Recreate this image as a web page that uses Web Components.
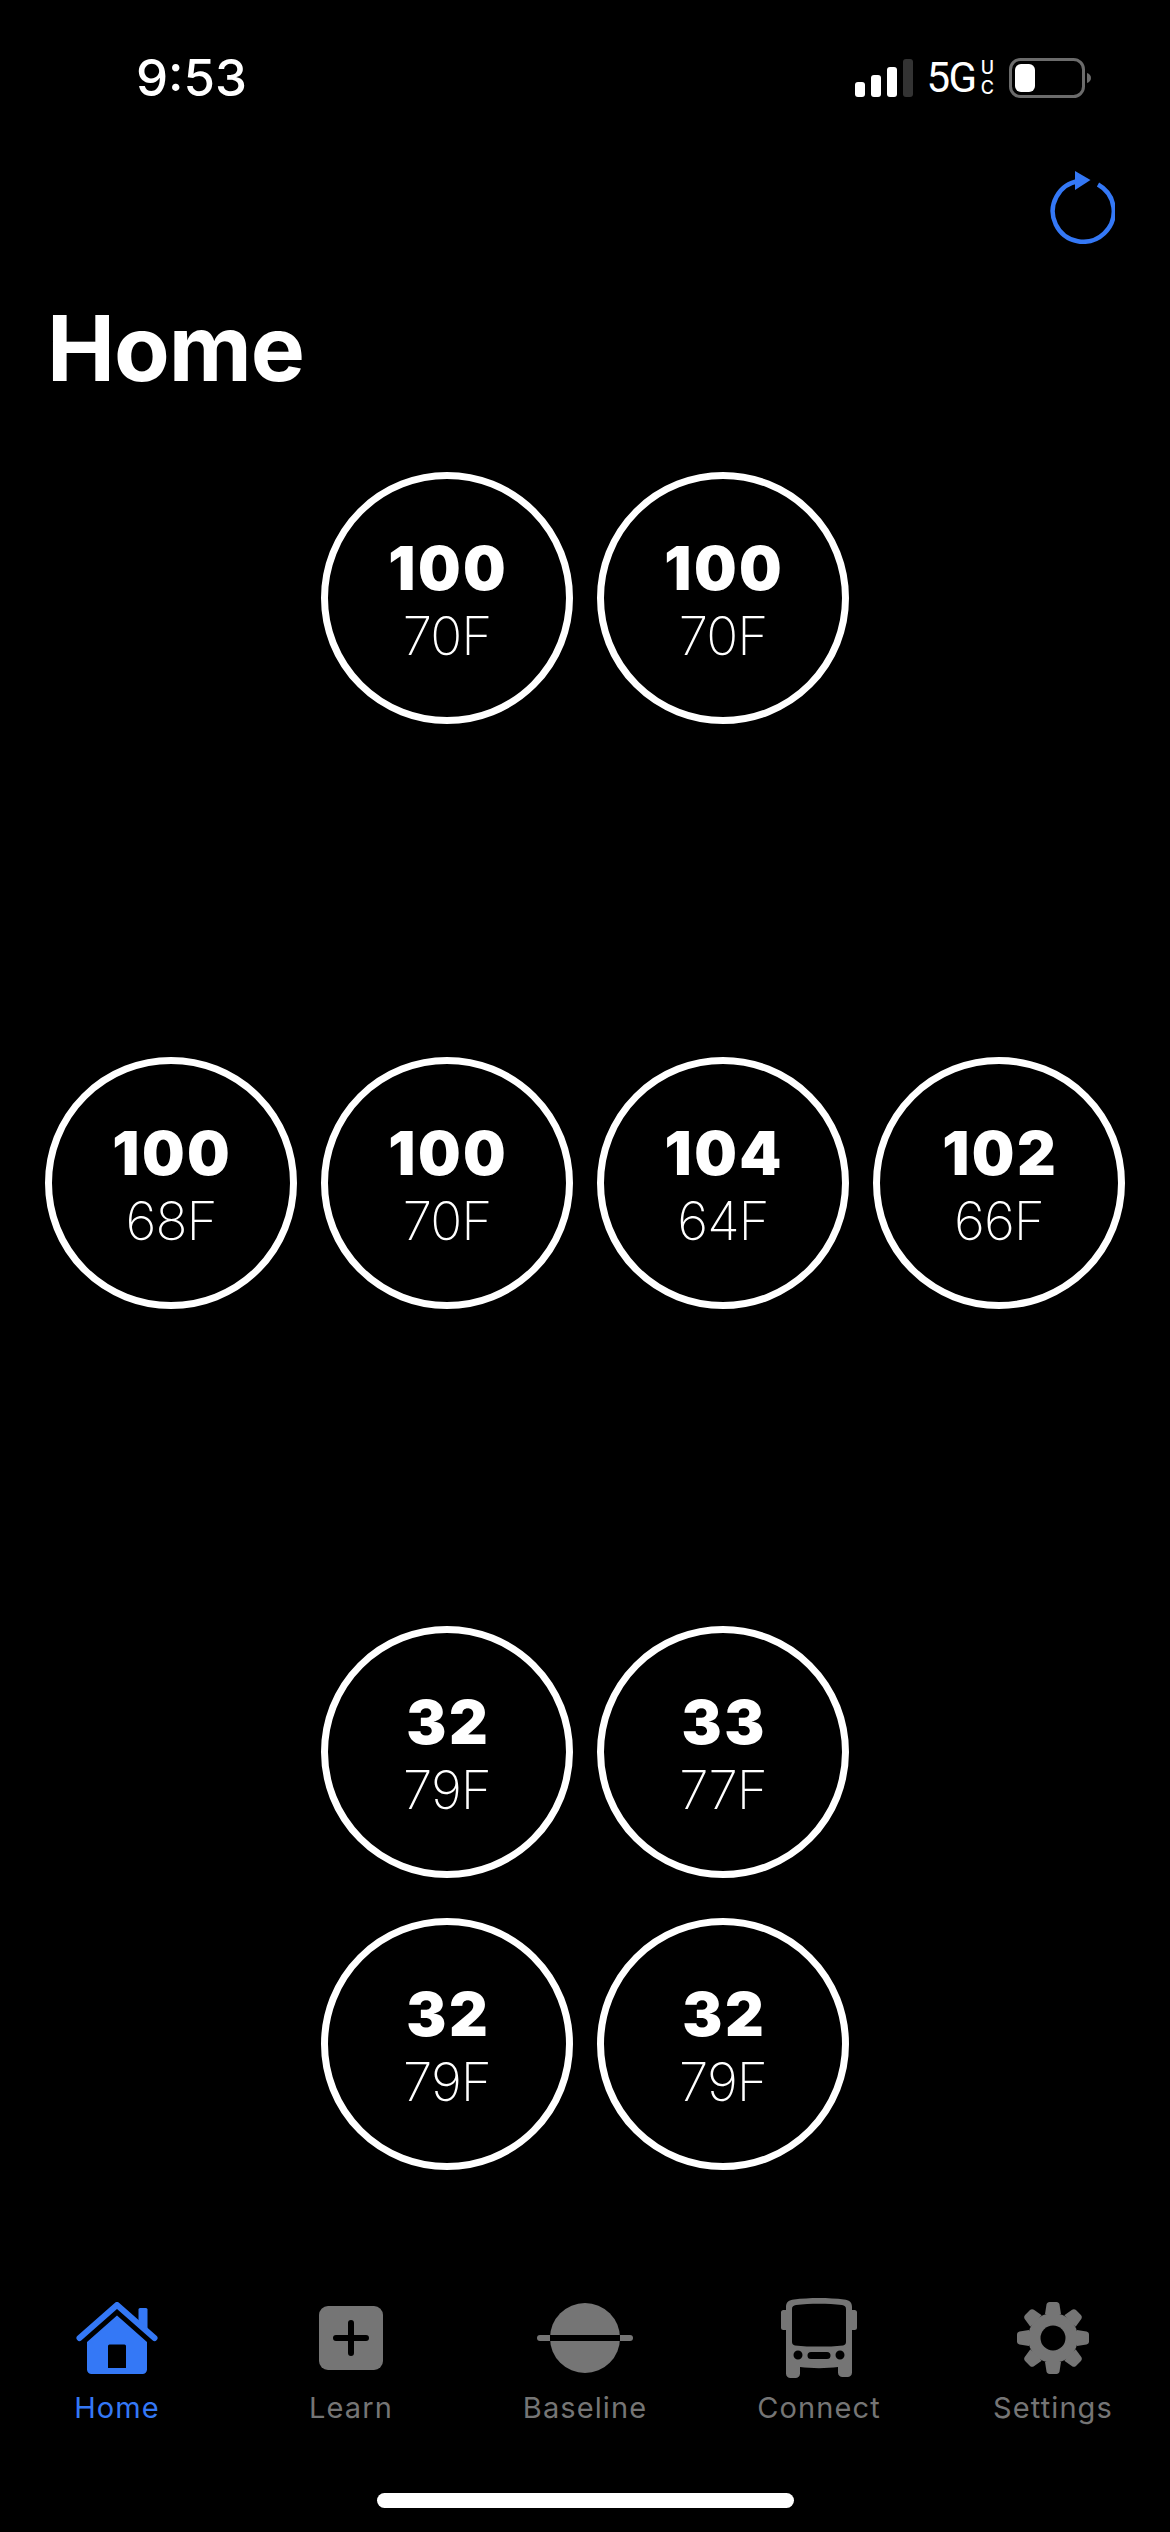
<!DOCTYPE html>
<html lang="en">
<head>
<meta charset="utf-8">
<title>Home</title>
<style>
  html, body { margin: 0; padding: 0; background: #000; }
  body { width: 1170px; height: 2532px; overflow: hidden; font-family: Inter, "Liberation Sans", sans-serif; color: #fff; }
  app-shell svg { display: block; }
</style>
</head>
<body>
<app-shell>
  <status-bar slot="status"></status-bar>
  <refresh-button slot="toolbar"></refresh-button>
  <page-title slot="title">Home</page-title>

  <gauge-row style="--row-top: 0">
    <tire-gauge><span slot="pressure">100</span><span slot="temp">70F</span></tire-gauge>
    <tire-gauge><span slot="pressure">100</span><span slot="temp">70F</span></tire-gauge>
  </gauge-row>
  <gauge-row style="--row-top: 333px">
    <tire-gauge><span slot="pressure">100</span><span slot="temp">68F</span></tire-gauge>
    <tire-gauge><span slot="pressure">100</span><span slot="temp">70F</span></tire-gauge>
    <tire-gauge><span slot="pressure">104</span><span slot="temp">64F</span></tire-gauge>
    <tire-gauge><span slot="pressure">102</span><span slot="temp">66F</span></tire-gauge>
  </gauge-row>
  <gauge-row style="--row-top: 317px">
    <tire-gauge><span slot="pressure">32</span><span slot="temp">79F</span></tire-gauge>
    <tire-gauge><span slot="pressure">33</span><span slot="temp">77F</span></tire-gauge>
  </gauge-row>
  <gauge-row style="--row-top: 40px">
    <tire-gauge><span slot="pressure">32</span><span slot="temp">79F</span></tire-gauge>
    <tire-gauge><span slot="pressure">32</span><span slot="temp">79F</span></tire-gauge>
  </gauge-row>

  <tab-bar slot="tabs">
    <tab-item active>
      <svg slot="icon" width="82" height="72" viewBox="0 0 82 72">
        <path fill="currentColor" d="M62.5 7.5a1.5 1.5 0 0 1 1.5-1.5h6a1.5 1.5 0 0 1 1.5 1.5V26h-9z"/>
        <path fill="none" stroke="#000" stroke-width="3" d="M0 39L41 7l41 32"/>
        <path fill="none" stroke="currentColor" stroke-width="6" stroke-linecap="round" stroke-linejoin="round" d="M3.5 36L41 3l37.5 33"/>
        <path fill="currentColor" fill-rule="evenodd" d="M41 13.5L71 40v27.500a4.500 4.500 0 0 1-4.500 4.500h-51a4.500 4.500 0 0 1-4.500-4.500V40zM33.500 42.500a1.500 1.500 0 0 0-1.500 1.500v22h18V44a1.500 1.500 0 0 0-1.500-1.500z"/>
      </svg>
      Home
    </tab-item>
    <tab-item>
      <svg slot="icon" width="64" height="64" viewBox="0 0 64 64">
        <rect width="64" height="64" rx="9" fill="currentColor"/>
        <path stroke="#000" stroke-width="6" stroke-linecap="round" d="M32 17v30M17 32h30"/>
      </svg>
      Learn
    </tab-item>
    <tab-item>
      <svg slot="icon" width="96" height="70" viewBox="0 0 96 70">
        <circle cx="48" cy="35" r="35" fill="currentColor"/>
        <rect x="0" y="32" width="96" height="6" rx="3" fill="currentColor"/>
        <rect x="13" y="32" width="70" height="6" fill="#000"/>
      </svg>
      Baseline
    </tab-item>
    <tab-item>
      <svg slot="icon" width="76" height="80" viewBox="0 0 76 80">
        <path fill="currentColor" fill-rule="evenodd" d="M5 9C5 4 8 2 13 1.500 28 -.5 48 -.5 63 1.500 68 2 71 4 71 9v3h2.500a2.500 2.500 0 0 1 2.500 2.500v15a2.500 2.500 0 0 1-2.500 2.500H71v42.500c0 2.800-2 4.500-4.500 4.500h-5c-2.500 0-4.500-1.700-4.500-4.500V69c-12 1.500-26 1.500-38 0v6.500c0 2.800-2 4.500-4.500 4.500h-5C7 80 5 78.300 5 75.500V32H2.500A2.500 2.500 0 0 1 0 29.500v-15A2.500 2.500 0 0 1 2.500 12H5zM15 7c-2.500.3-4 1.500-4 4v33c0 2 1 3 3 3.400 15 1.600 33 1.600 48 0 2-.4 3-1.400 3-3.400V11c0-2.500-1.500-3.700-4-4-14-1.600-32-1.600-46 0zM17 52.500a4.500 4.500 0 1 0 0 9 4.500 4.500 0 0 0 0-9zM59 52.500a4.500 4.500 0 1 0 0 9 4.500 4.500 0 0 0 0-9zM30 54a3.500 3.500 0 0 0 0 7h16a3.500 3.500 0 0 0 0-7z"/>
      </svg>
      Connect
    </tab-item>
    <tab-item>
      <svg slot="icon" width="72" height="72" viewBox="0 0 72 72">
        <circle cx="36" cy="36" r="25" fill="currentColor"/>
        <g fill="currentColor">
          <path d="M28 12l1.500-9.500C29.800 1 31 0 32.500 0h7c1.500 0 2.700 1 3 2.500L44 12z"/>
          <path transform="rotate(45 36 36)" d="M28 12l1.500-9.500C29.800 1 31 0 32.500 0h7c1.500 0 2.700 1 3 2.500L44 12z"/>
          <path transform="rotate(90 36 36)" d="M28 12l1.500-9.500C29.800 1 31 0 32.500 0h7c1.500 0 2.700 1 3 2.500L44 12z"/>
          <path transform="rotate(135 36 36)" d="M28 12l1.500-9.500C29.800 1 31 0 32.500 0h7c1.500 0 2.700 1 3 2.500L44 12z"/>
          <path transform="rotate(180 36 36)" d="M28 12l1.500-9.500C29.800 1 31 0 32.500 0h7c1.500 0 2.700 1 3 2.500L44 12z"/>
          <path transform="rotate(225 36 36)" d="M28 12l1.500-9.500C29.800 1 31 0 32.500 0h7c1.500 0 2.700 1 3 2.500L44 12z"/>
          <path transform="rotate(270 36 36)" d="M28 12l1.500-9.500C29.800 1 31 0 32.500 0h7c1.500 0 2.700 1 3 2.500L44 12z"/>
          <path transform="rotate(315 36 36)" d="M28 12l1.500-9.500C29.800 1 31 0 32.500 0h7c1.500 0 2.700 1 3 2.500L44 12z"/>
        </g>
        <circle cx="36" cy="36" r="12.500" fill="#000"/>
      </svg>
      Settings
    </tab-item>
  </tab-bar>
</app-shell>

<script>
class AppShell extends HTMLElement {
  constructor() {
    super();
    this.attachShadow({ mode: "open" });
    this.shadowRoot.innerHTML = `
      <style>
        :host { display: flex; flex-direction: column; width: 1170px; height: 2532px; }
        main { display: flex; flex-direction: column; margin-top: 71px; }
        footer { margin-top: auto; display: flex; flex-direction: column; align-items: center; }
        #indicator { width: 417px; height: 15px; margin: 67px 0 24px; border-radius: 8px; background: #fff; }
      </style>
      <slot name="status"></slot>
      <slot name="toolbar"></slot>
      <slot name="title"></slot>
      <main><slot></slot></main>
      <footer>
        <slot name="tabs"></slot>
        <div id="indicator"></div>
      </footer>
    `;
  }
}

class StatusBar extends HTMLElement {
  constructor() {
    super();
    this.attachShadow({ mode: "open" });
    this.shadowRoot.innerHTML = `
      <style>
        :host { display: flex; align-items: center; justify-content: space-between; height: 40px; padding: 58px 79px 0 136px; }
        #time { font: 500 51px/40px Inter, "Liberation Sans", sans-serif; }
        #icons { display: flex; align-items: center; }
        #net { display: flex; align-items: center; margin-left: 13px; font: 400 42px/36px Roboto, "Liberation Sans", sans-serif; letter-spacing: -1.5px; }
        #uc { display: flex; flex-direction: column; margin: 0 15px 0 5px; font: 500 18px/20px Inter, "Liberation Sans", sans-serif; letter-spacing: 0; }
        svg { display: block; }
      </style>
      <span id="time">9:53</span>
      <div id="icons">
        <svg width="58" height="38" viewBox="0 0 58 38">
          <rect x="0" y="23" width="10" height="15" rx="3" fill="#fff"/>
          <rect x="16" y="16" width="10" height="22" rx="3" fill="#fff"/>
          <rect x="32" y="8" width="10" height="30" rx="3" fill="#fff"/>
          <rect x="48" y="0" width="10" height="38" rx="3" fill="#333"/>
        </svg>
        <div id="net">5G<div id="uc"><span>U</span><span>C</span></div></div>
        <svg width="82" height="40" viewBox="0 0 82 40">
          <rect x="1.500" y="1.500" width="73" height="37" rx="10" fill="none" stroke="#6b6b6b" stroke-width="3"/>
          <rect x="6" y="6" width="20" height="28" rx="6" fill="#fff"/>
          <path d="M78 15c2.500.8 4 2.700 4 5s-1.500 4.200-4 5z" fill="#6b6b6b"/>
        </svg>
      </div>
    `;
  }
}

class RefreshButton extends HTMLElement {
  constructor() {
    super();
    this.attachShadow({ mode: "open" });
    this.shadowRoot.innerHTML = `
      <style>
        :host { display: flex; justify-content: flex-end; padding: 73px 55px 0 0; color: #3478f6; }
        svg { display: block; }
      </style>
      <svg width="66" height="73" viewBox="0 0 66 73">
        <path fill="none" stroke="currentColor" stroke-width="4.500" d="M49 13.500A30.500 30.500 0 1 1 30 10"/>
        <path fill="currentColor" d="M26 0l15.500 9L26 19z"/>
      </svg>
    `;
  }
}

class PageTitle extends HTMLElement {
  constructor() {
    super();
    this.attachShadow({ mode: "open" });
    this.shadowRoot.innerHTML = `
      <style>
        :host { display: block; padding: 51px 0 0 47px; font: 700 91px/106px Inter, "Liberation Sans", sans-serif; letter-spacing: -1px; }
      </style>
      <slot></slot>
    `;
  }
}

class GaugeRow extends HTMLElement {
  constructor() {
    super();
    this.attachShadow({ mode: "open" });
    this.shadowRoot.innerHTML = `
      <style>
        :host { display: flex; justify-content: center; gap: 24px; margin-top: var(--row-top, 0); }
      </style>
      <slot></slot>
    `;
  }
}

class TireGauge extends HTMLElement {
  constructor() {
    super();
    this.attachShadow({ mode: "open" });
    this.shadowRoot.innerHTML = `
      <style>
        :host { display: flex; flex-direction: column; align-items: center; box-sizing: border-box; width: 252px; height: 252px; padding-top: 55px; border: 7px solid #fff; border-radius: 50%; }
        #pressure { padding-left: 2.5px; font: 900 60px/68px Inter, "Liberation Sans", sans-serif; letter-spacing: 2.5px; }
        #temp { font: 250 53px/68px Inter, "Liberation Sans", sans-serif; letter-spacing: -1px; }
      </style>
      <div id="pressure"><slot name="pressure"></slot></div>
      <div id="temp"><slot name="temp"></slot></div>
    `;
  }
}

class TabBar extends HTMLElement {
  constructor() {
    super();
    this.attachShadow({ mode: "open" });
    this.shadowRoot.innerHTML = `
      <style>
        :host { display: grid; grid-template-columns: repeat(5, 234px); width: 1170px; }
      </style>
      <slot></slot>
    `;
  }
}

class TabItem extends HTMLElement {
  constructor() {
    super();
    this.attachShadow({ mode: "open" });
    this.shadowRoot.innerHTML = `
      <style>
        :host { display: flex; flex-direction: column; align-items: center; color: #757575; font: 400 29px/36px Inter, "Liberation Sans", sans-serif; letter-spacing: 1.1px; }
        :host([active]) { color: #3478f6; }
        #icon { display: flex; align-items: center; justify-content: center; height: 80px; margin-bottom: 12px; }
      </style>
      <div id="icon"><slot name="icon"></slot></div>
      <slot></slot>
    `;
  }
}

customElements.define("app-shell", AppShell);
customElements.define("status-bar", StatusBar);
customElements.define("refresh-button", RefreshButton);
customElements.define("page-title", PageTitle);
customElements.define("gauge-row", GaugeRow);
customElements.define("tire-gauge", TireGauge);
customElements.define("tab-bar", TabBar);
customElements.define("tab-item", TabItem);
</script>
</body>
</html>
